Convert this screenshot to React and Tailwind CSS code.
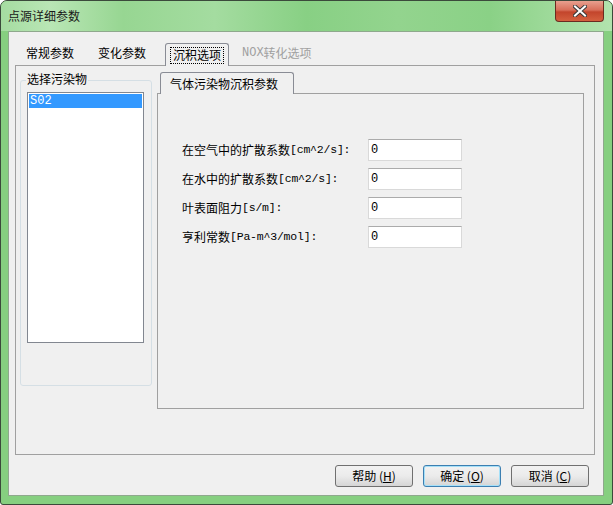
import React from "react";

const cjk = { fontFamily: '"Noto Sans CJK SC", "Noto Sans", sans-serif' };
const mono = { fontFamily: '"Liberation Mono", "Noto Sans CJK SC", monospace' };

function Label({ cn, en }) {
  return (
    <div className="text-[12px] leading-[14px] text-black whitespace-nowrap flex items-center">
      <span style={cjk}>{cn}</span>
      <span style={mono} className="text-[11.5px] tracking-[-0.2px]">{en}</span>
    </div>
  );
}

function Field({ cn, en, mt }) {
  return (
    <div className={`flex items-center ${mt}`}>
      <div className="w-[186px]">
        <Label cn={cn} en={en} />
      </div>
      <div className="w-[94px] h-[22px] bg-white border border-[#d9d9d9] border-t-[#ababab] pl-[2px] pt-[3px] text-[12px] leading-[14px]" style={mono}>
        0
      </div>
    </div>
  );
}

function Btn({ children, focus }) {
  return (
    <div
      className={`w-[78px] h-[22px] rounded-[3px] border flex items-center justify-center text-[12px] text-black ${
        focus ? "border-[#3c7fb1] shadow-[inset_0_0_0_1px_#a6e0f8]" : "border-[#707070]"
      } bg-gradient-to-b from-[#f2f2f2] via-[#ebebeb] to-[#d5d5d5]`}
      style={cjk}
    >
      {children}
    </div>
  );
}

export default function App() {
  return (
    <div className="w-[613px] h-[505px] bg-white">
      <div className="w-[613px] h-[505px] rounded-t-[7px] rounded-b-[3px] border border-[#3b4a3b] bg-[#86cf80] flex flex-col overflow-hidden">
        <div className="h-[30px] flex items-start shrink-0"
          style={{ background: "linear-gradient(90deg,#a5dca1 0%,#b9e6b5 8%,#97d692 20%,#a4dca0 35%,#88d084 50%,#93d48e 65%,#8ad186 80%,#b2e3ae 100%)" }}>
          <div className="pl-[7px] pt-[8px] text-[12px] leading-[14px] text-[#1a1a1a]" style={cjk}>
            点源详细参数
          </div>
          <div className="ml-auto mr-[8px] w-[49px] h-[21px] rounded-b-[4px] border border-t-0 border-[#6b2a20] flex items-center justify-center"
            style={{ background: "linear-gradient(180deg,#e8a08f 0%,#d86f5a 45%,#c3452c 55%,#d4603f 100%)" }}>
            <svg width="14" height="12" viewBox="0 0 14 12">
              <path d="M2 1.5 L12 10.5 M12 1.5 L2 10.5" stroke="#3a3a3a" strokeWidth="4" strokeLinecap="square" />
              <path d="M2 1.5 L12 10.5 M12 1.5 L2 10.5" stroke="#ffffff" strokeWidth="2" strokeLinecap="square" />
            </svg>
          </div>
        </div>
        <div className="ml-[7px] mr-[8px] h-[465px] bg-[#f0f0f0] border border-[#8fa88d] flex flex-col shrink-0">
          {/* tab row */}
          <div className="h-[33px] relative shrink-0">
            <div className="flex items-end h-[33px] pl-[17px] text-[12px] leading-[14px]" style={cjk}>
              <div className="pb-[5px] w-[72px]">常规参数</div>
              <div className="pb-[5px] w-[67px]">变化参数</div>
              <div className="relative w-[64px] h-[23px] rounded-t-[3px] border border-b-0 border-[#898c95] bg-[#f0f0f0] flex items-center justify-center -mb-[1px] z-10 mr-[13px]">
                <div className="border border-dotted border-black px-[2px] leading-[14px] h-[17px] flex items-center">沉积选项</div>
              </div>
              <div className="pb-[5px] text-[#a0a0a0] flex items-center">
                <span style={mono} className="text-[12px] font-normal">NOX</span>
                <span>转化选项</span>
              </div>
            </div>
          </div>
          {/* tab page */}
          <div className="ml-[6px] w-[580px] h-[390px] border border-[#a0a0a0] flex shrink-0">
            {/* group box */}
            <div className="ml-[4px] mt-[5px] w-[132px] flex flex-col">
              <div className="relative h-[306px] mt-[9px] rounded-[3px] border border-[#d5dfe5]">
                <div className="absolute -top-[9px] left-[5px] px-[1px] bg-[#f0f0f0] text-[12px] leading-[14px]" style={cjk}>选择污染物</div>
                <div className="ml-[6px] mt-[11px] w-[117px] h-[251px] bg-white border border-[#828790]">
                  <div className="h-[14px] bg-[#3399ff] text-white text-[12px] leading-[14px] pl-[1px] mt-[1px] mx-[1px]" style={mono}>S02</div>
                </div>
              </div>
            </div>
            {/* inner tab control */}
            <div className="ml-[5px] flex flex-col">
              <div className="h-[27px] flex items-end pl-[3px] shrink-0">
                <div className="w-[134px] h-[22px] rounded-t-[3px] border border-b-0 border-[#898c95] bg-[#f0f0f0] text-[12px] leading-[14px] pl-[9px] pt-[4px] -mb-[1px] z-10" style={cjk}>
                  气体污染物沉积参数
                </div>
              </div>
              <div className="w-[427px] h-[316px] border border-[#a0a0a0] flex flex-col pl-[24px] pt-[45px]">
                <Field cn="在空气中的扩散系数" en="[cm^2/s]:" mt="" />
                <Field cn="在水中的扩散系数" en="[cm^2/s]:" mt="mt-[7px]" />
                <Field cn="叶表面阻力" en="[s/m]:" mt="mt-[7px]" />
                <Field cn="亨利常数" en="[Pa-m^3/mol]:" mt="mt-[7px]" />
              </div>
            </div>
          </div>
          {/* buttons */}
          <div className="flex justify-end gap-[10px] mr-[14px] mt-[10px]">
            <Btn>帮助 (<u>H</u>)</Btn>
            <Btn focus>确定 (<u>O</u>)</Btn>
            <Btn>取消 (<u>C</u>)</Btn>
          </div>
        </div>
      </div>
    </div>
  );
}
